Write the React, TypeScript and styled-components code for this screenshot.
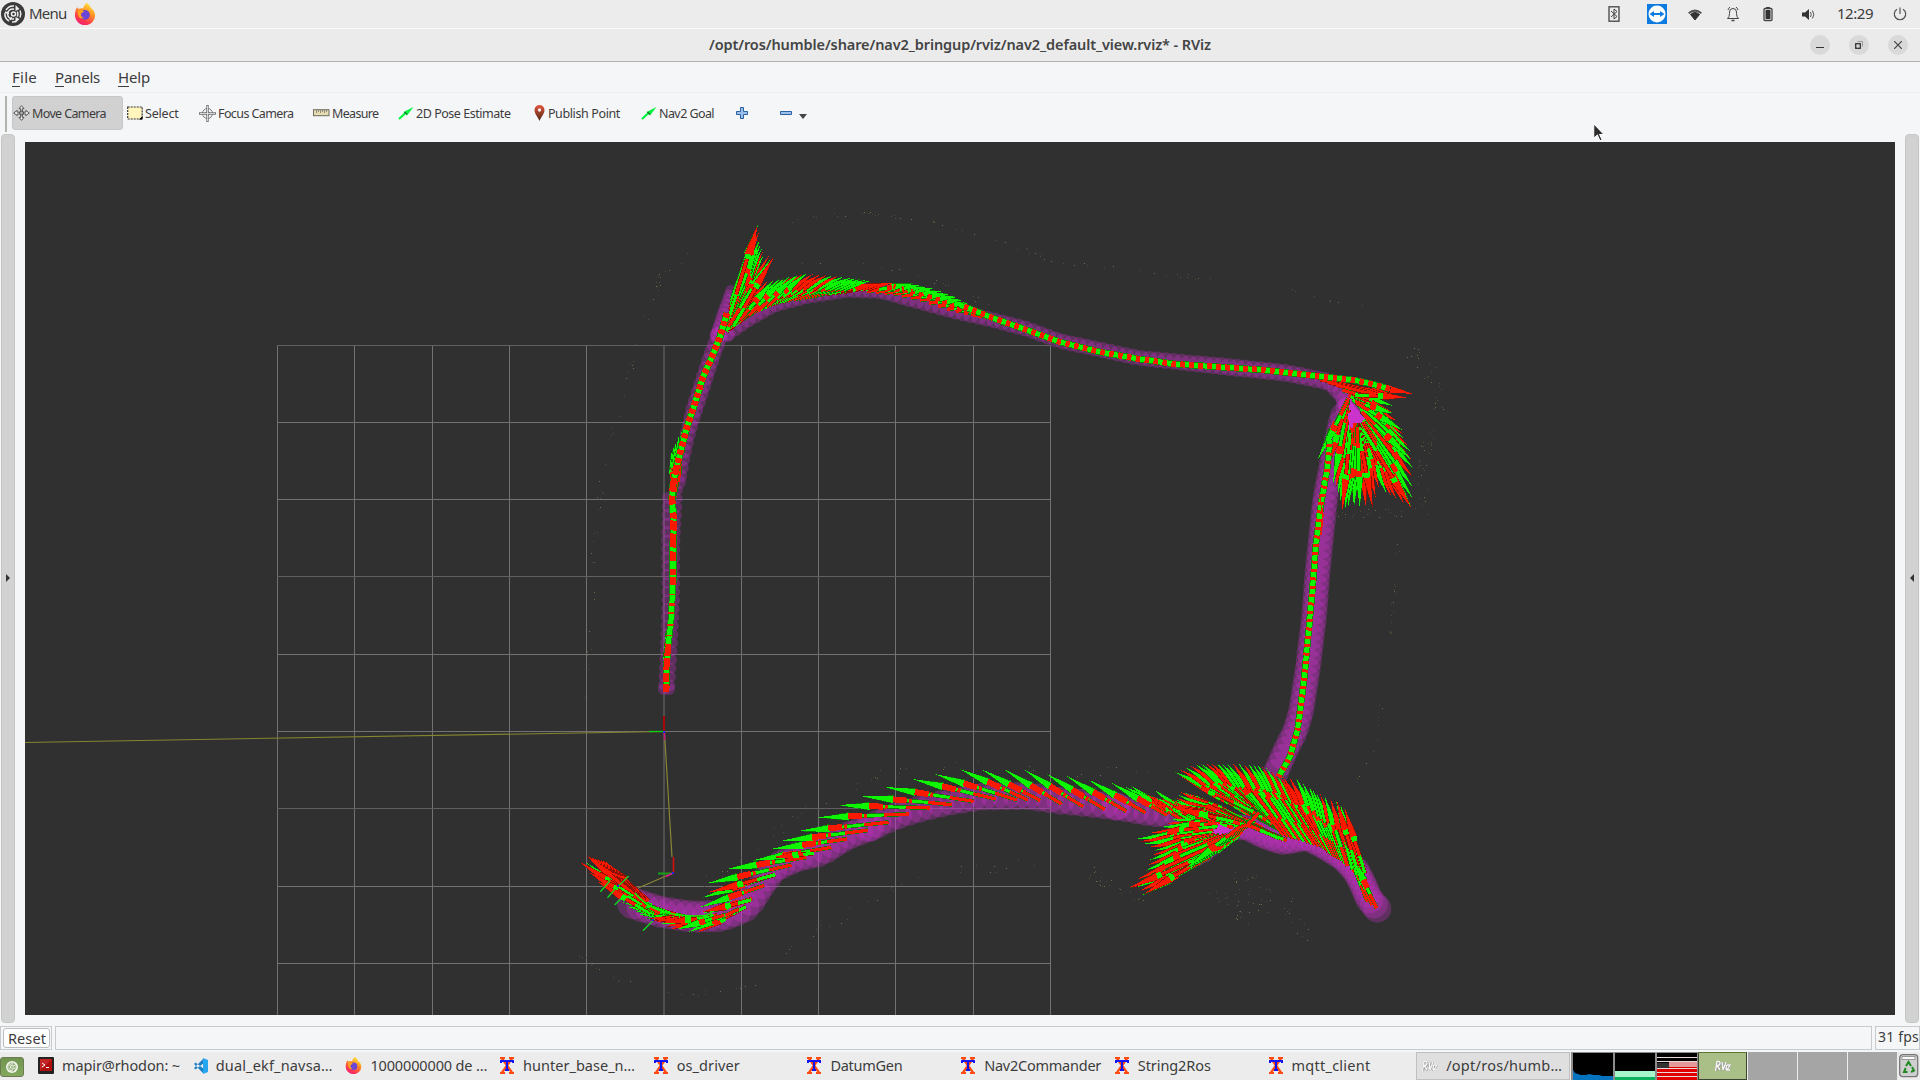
import React, { useLayoutEffect, useRef } from "react";
import styled, { createGlobalStyle } from "styled-components";

const Global = createGlobalStyle`
  * { box-sizing: border-box; }
  html, body { margin: 0; padding: 0; background: #f5f6f7; overflow: hidden; }
  body { font-family: "Noto Sans", "Open Sans", sans-serif; color: #3c3c3c; }
  svg { display: block; flex: none; }
`;

const Screen = styled.div`
  width: 1920px; height: 1080px; display: flex; flex-direction: column; overflow: hidden;
  background: #f5f6f8;
`;
const TopPanel = styled.header`
  height: 29px; flex: none; display: flex; align-items: center; justify-content: space-between;
  background: #ececec; border-bottom: 1px solid #fbfbfb; padding: 0 13px 0 1px;
`;
const TopLeft = styled.div`display: flex; align-items: center; height: 28px;`;
const MenuLabel = styled.div`margin: 0 8px 0 4px; font-size: 15px; line-height: 26px; height: 28px; width: 37px;`;
const Tray = styled.div`display: flex; align-items: center; height: 28px;`;
const TraySlot = styled.div<{ $w: number }>`
  width: ${p => p.$w}px; height: 28px; display: flex; align-items: center; justify-content: center;
`;
const Clock = styled.div`width: 36px; height: 28px; margin: 0 20px 0 1px; font-size: 15px; line-height: 26px;`;
const TitleBar = styled.div`
  height: 33px; flex: none; background: #ebebeb; border-bottom: 1px solid #b4b3b4;
  display: grid; grid-template-columns: 120px 1fr 120px; align-items: center;
`;
const Title = styled.div`
  grid-column: 2; justify-self: center; font-size: 14.5px; font-weight: 600; line-height: 30px; height: 32px; color: #444;
`;
const WinButtons = styled.div`display: flex; gap: 19px; justify-content: flex-end; padding-right: 12px;`;
const WinButton = styled.div`
  width: 20px; height: 20px; border-radius: 50%; background: #d9d9d9;
  display: flex; align-items: center; justify-content: center;
`;
const MenuBar = styled.nav`
  height: 31px; flex: none; display: flex; padding-left: 12px; gap: 18px;
  border-bottom: 1px solid #ebedee; font-size: 15px; line-height: 31px;
`;
const Mnemonic = styled.span`border-bottom: 1px solid #3c3c3c; padding-bottom: 0;`;
const MenuItem = styled.div<{ $w: number }>`width: ${p => p.$w}px; white-space: nowrap;
  & > span > span { display: inline-block; line-height: 17px; }
`;
const ToolBar = styled.div`
  height: 41px; flex: none; display: flex; align-items: flex-start; padding: 3px 0 0 5px;
`;
const ToolHandle = styled.div`width: 1.5px; height: 36px; background: #b3b3ae; margin-right: 5.5px;`;
const Tool = styled.button<{ $w: number; $gap: number; $active?: boolean }>`
  width: ${p => p.$w}px; height: 34px; margin: 0 ${p => p.$gap}px 0 0; padding: 0; display: flex; align-items: center;
  border: 1px solid ${p => (p.$active ? "#c6c6c6" : "transparent")}; border-radius: 3px;
  background: ${p => (p.$active ? "#d1d1d1" : "transparent")};
  font: 12.5px "Noto Sans", sans-serif; color: #3c3c3c;
  & > svg { margin-right: 2px; }
`;
const Body = styled.main`height: 889px; flex: none; display: flex; padding: 0 1px; justify-content: space-between; align-items: flex-start;`;
const SideHandle = styled.div`
  width: 14px; height: 889px; border: 1px solid #c4c6c8; border-radius: 4px; background: #d2d2d2;
  display: flex; align-items: center; justify-content: center; padding-bottom: 2px;
`;
const View = styled.div`width: 1870px; height: 873px; margin-top: 8px; background: #303030;`;
const StatusBar = styled.footer`height: 29px; flex: none; display: flex; align-items: flex-end; gap: 3px; padding-bottom: 2px;`;
const StatusCell = styled.div<{ $w?: number }>`
  height: 24px; border: 1px solid #c8cbcd; ${p => (p.$w ? `width: ${p.$w}px;` : "flex: 1;")}
  padding: 1px 2px; font-size: 14px; line-height: 17px; white-space: nowrap; overflow: hidden;
`;
const ResetButton = styled.div`
  height: 20px; width: 47px; background: #fff; border: 1px solid #b9bec2; border-radius: 3px;
  padding-left: 4px; font-size: 14.5px; line-height: 19px;
`;
const TaskBar = styled.footer`
  height: 28px; flex: none; display: flex; align-items: center; background: #ececec;
`;
const MateButton = styled.div`
  width: 24px; height: 20px; border: 1px solid #6b7c50; border-radius: 3px; background: linear-gradient(#6f9450, #82a95d);
  display: flex; align-items: center; justify-content: center; margin: 1px 9px 0 0;
`;
const Task = styled.div<{ $active?: boolean }>`
  width: 153.7px; height: 28px; display: flex; align-items: center; gap: 8px; padding: 0 0 2px 5px; flex: none;
  font-size: 14.5px; white-space: nowrap;
  & > svg { margin-top: 1px; }
  ${p => p.$active && "background:#dfdfdf; border:1px solid #bfbfbf; padding-left:4px; padding-bottom:2px;"}
`;
const Monitors = styled.div`display: flex; gap: 2px; height: 28px; padding: 1px 1px 0 2px; background: #8c8c8c; margin-left: 1px;`;
const Monitor = styled.div`width: 40px; height: 27px; background: #000; overflow: hidden;`;
const Workspaces = styled.div`display: flex; gap: 1px; height: 28px; background: #eee;`;
const Workspace = styled.div<{ $on?: boolean }>`
  width: 49px; height: 28px; background: ${p => (p.$on ? "#a9bf87" : "#a5a5a5")};
  ${p => p.$on && "border: 1px solid #3c4430; border-top-color: #5f7838;"}
  display: flex; align-items: center; justify-content: center;
`;
const Trash = styled.div`margin-left: 2px;`;
const FitSpan = styled.span`display: inline-block; white-space: nowrap;`;
const Pointer = styled.div`position: absolute; left: 1592px; top: 122px;`;

/* Spaces the letters so that a label takes exactly the given width. */
function Fit({ w, children }: { w: number; children: React.ReactNode }) {
  const ref = useRef<HTMLSpanElement>(null);
  useLayoutEffect(() => {
    const el = ref.current;
    if (!el) return;
    el.style.letterSpacing = "0px";
    const n = (el.textContent || "").length;
    const now = el.getBoundingClientRect().width;
    el.style.letterSpacing = `${(w - now) / n}px`;
  }, [w]);
  return <FitSpan ref={ref}>{children}</FitSpan>;
}

/* ---------- icons ---------- */
const Mate = ({ s, fg, bg }: { s: number; fg: string; bg: string }) => (
  <svg width={s} height={s} viewBox="0 0 24 24" fill="none" stroke={fg} strokeWidth="1.5">
    <circle cx="12" cy="12" r="12" fill={bg} stroke="none" />
    <path d="M13 4A8 8 0 0 0 5 8.200M4 11a8 8 0 0 0 4 8M11 20a8 8 0 0 0 4-.7M19 15.500a8 8 0 0 0 0-7" />
    <path d="M13 7.200a5 5 0 1 0 0 9.600M16.300 9.500a5 5 0 0 1 0 5" /><path d="M4 10l4 1.500M9 18l1.500-3" />
    <circle cx="12.500" cy="12" r="2" />
    <path d="M14.500 3v6l4-2zM14.500 21v-6l4 2z" fill={fg} stroke="none" />
  </svg>
);
const Fox = ({ s }: { s: number }) => (
  <svg width={s} height={s} viewBox="0 0 24 24">
    <defs>
      <linearGradient id="fx" x1=".8" y1="0" x2=".3" y2="1"><stop offset="0" stopColor="#fff04a" /><stop offset=".4" stopColor="#ff9522" /><stop offset=".8" stopColor="#ff3350" /><stop offset="1" stopColor="#f0227a" /></linearGradient>
    </defs>
    <path d="M14 0c2 1.500 4 3.500 4.500 5.500C21 7 23 10 23 13.500A11 10.500 0 0 1 1 14C1 10 1.500 7 3.500 4.500L5 6.500C7 5.500 9 5.500 10 6 11 3 12 1 14 0z" fill="url(#fx)" />
    <circle cx="12" cy="13" r="5.300" fill="#6b45d6" />
    <path d="M4 8c3-1.500 5-.5 7 1l-3 2.500c-1 2 .5 4.500 3 4.500-3 2-6 0-6.500-3z" fill="#ffa01e" />
  </svg>
);
const XTerm = () => (
  <svg width="16" height="17" viewBox="0 0 16 17">
    <path d="M1 1h5M10 1h5M1 16h5M10 16h5M3 1.500l10 14M13 1.500l-10 14" stroke="#ff4a12" strokeWidth="2.200" />
    <path d="M2 6V4h12v2M8 4v9M6 13h4" stroke="#1414f0" strokeWidth="2" fill="none" />
  </svg>
);
const Term = () => (
  <svg width="16" height="17" viewBox="0 0 16 17">
    <rect width="16" height="17" rx="1" fill="#232323" /><rect x="2" y="2" width="12" height="12" fill="#b00d0d" />
    <path d="M2 14V2h12z" fill="#d63b3b" opacity=".5" /><path d="M4 6l3 2-3 2M8 10.500h3" stroke="#fff" fill="none" />
  </svg>
);
const Code = () => (
  <svg width="16" height="16" viewBox="0 0 16 16">
    <path d="M11 1L2 10l1.500 1.500L12 5V1z M11 15L2 6l1.500-1.500L12 11v4z" fill="#1c80c6" /><path d="M11 0l5 2v12l-5 2z" fill="#27a5ee" />
  </svg>
);
const RvizMark = ({ c }: { c: string }) => (
  <svg width="17" height="14" viewBox="0 0 17 14" fill="none" stroke="#909090" strokeWidth="2.200">
    <path d="M2 12L3.300 3c4-1 4 4 0 4l3 4.500M8 3l1.200 8 2.800-8M12.800 6l-.5 5M13.500 6h2.500l-3 5h3" />
    <path d="M1.500 12L3 2.500c4-1 4 4 0 4l3 4.500M8 3l1 8 3-8M12.500 6l-.5 5M13 6h3l-3 5h3" stroke={c} strokeWidth="1.400" />
  </svg>
);
const MoveIcon = () => (
  <svg width="17" height="16" viewBox="0 0 17 16" fill="#f4f4f4" stroke="#444" strokeWidth=".9">
    <path d="M8.500.7l2.500 3H9.300v3.500h3.500V5.400l3.500 2.600-3.500 2.600V8.900H9.300v3.500H11l-2.500 3-2.500-3h1.700V8.900H4.200v1.700L.7 8l3.500-2.600v1.800h3.500V3.700H6z" /><circle cx="8.500" cy="8" r="2" fill="#aaa" />
  </svg>
);
const SelectIcon = () => (
  <svg width="16" height="14" viewBox="0 0 16 14"><rect x=".7" y="1" width="14.500" height="12" fill="#fff5bd" stroke="#333" strokeWidth="1.200" strokeDasharray="2 1" /><path d="M15.500 10v3.500H12z" fill="#000" /></svg>
);
const FocusIcon = () => (
  <svg width="17" height="17" viewBox="0 0 17 17" fill="none" stroke="#777"><circle cx="8.500" cy="8.500" r="5" /><circle cx="8.500" cy="8.500" r="2" /><path d="M8.500 0v17M0 8.500h17" strokeWidth="2.400" /><path d="M8.500 1v15M1 8.500h15" stroke="#eee" strokeWidth=".8" /></svg>
);
const RulerIcon = () => (
  <svg width="17" height="8" viewBox="0 0 17 8"><rect x=".5" y=".7" width="15.500" height="6" fill="#e6dcae" stroke="#6b6b60" /><path d="M3.500 1v3M5.500 1v2M7.500 1v3M9.500 1v2M11.500 1v3M13.500 1v2" stroke="#777" strokeWidth=".8" /></svg>
);
const GreenArrow = () => (
  <svg width="16" height="13" viewBox="0 0 16 13"><path d="M1 12L8 5.500" stroke="#00f43c" strokeWidth="2.200" /><path d="M15.500 0L5.500 5l3.500 3.500z" fill="#00f43c" /><path d="M6.500 5l2.500 2.500" stroke="#137b2b" strokeWidth="1.400" /></svg>
);
const PinIcon = () => (
  <svg width="11" height="16" viewBox="0 0 11 16"><defs><linearGradient id="pin" x2="0" y2="1"><stop offset="0" stopColor="#e4553a" /><stop offset="1" stopColor="#4a2a14" /></linearGradient></defs><path d="M5.500 16C4 12 .5 9 .5 5a5 5 0 0 1 10 0c0 4-3.500 7-5 11z" fill="url(#pin)" /><circle cx="5.500" cy="5" r="1.700" fill="#f3eeee" /></svg>
);
const PlusIcon = () => (
  <svg width="12" height="12" viewBox="0 0 12 12"><path d="M4.500.5h3v4h4v3h-4v4h-3v-4h-4v-3h4z" fill="#9cc0ea" stroke="#2c60a4" /></svg>
);
const MinusIcon = () => (
  <svg width="12" height="5" viewBox="0 0 12 5"><path d="M.5.5h11v3H.5z" fill="#9cc0ea" stroke="#2c60a4" /></svg>
);

/* ---------- 3D view ---------- */
type Pt = [number, number];
type Frame = (x: number, y: number) => Pt;
const frame = (ox: number, oy: number, sx: number, sy: number): Frame => (x, y) => [ox + x / sx, oy + y / sy];
const north = frame(560, 200, 3, 3);
const east = frame(1220, 320, 3, 3);
const west = frame(560, 740, 2.8, 3);
const south = frame(1060, 740, 3, 3);

const GREEN = "#0df500";
const RED = "#fb1a00";

function rng(seed: number) {
  let s = seed;
  return () => ((s = (s * 16807) % 2147483647) / 2147483647);
}

interface Arrow { a: Pt; b: Pt; head: string; alt: string; collar: number; bare: boolean }

/* Rows are [tail x, tail y, tip x, tip y]; extra poses are blended in between rows. */
function sweep(f: Frame, rows: number[][], between: number, mode: "mix" | "g" | "r" = "mix", collar = 8): Arrow[] {
  const out: Arrow[] = [];
  const r = rng(rows.length * 991 + Math.round(rows[0][0] * 37));
  let k = 0;
  rows.forEach((row, i) => {
    const next = rows[i + 1];
    const n = next ? between + 1 : 1;
    for (let j = 0; j < n; j++) {
      const t = j / n;
      const v = row.map((c, q) => (next ? c + (next[q] - c) * t : c));
      const flip = r() < 0.22;
      const g = mode === "g" || (mode === "mix" && (k % 2 === 0) !== flip);
      out.push({
        a: f(v[0], v[1]), b: f(v[2], v[3]), head: g ? GREEN : RED, alt: g ? RED : GREEN,
        collar: mode === "mix" ? 3 + r() * 8 : collar, bare: collar === 0 || (mode === "mix" && r() < 0.35),
      });
      k++;
    }
  });
  return out;
}

function ArrowMark({ a, b, head, alt, collar, bare }: Arrow) {
  const dx = b[0] - a[0], dy = b[1] - a[1], L = Math.hypot(dx, dy) || 1;
  const ux = dx / L, uy = dy / L, nx = -uy, ny = ux;
  const hl = Math.min(31, L * 0.48);
  const p = (d: number, w: number) => `${(a[0] + ux * d + nx * w).toFixed(1)},${(a[1] + uy * d + ny * w).toFixed(1)}`;
  const quad = (d0: number, d1: number, w: number) => [p(d0, w), p(d1, w), p(d1, -w), p(d0, -w)].join(" ");
  const dark = head === GREEN ? "#0a7d04" : "#8e1204";
  return (
    <g>
      <polygon points={quad(0, L - hl, 2.1)} fill={dark} />
      <polygon points={quad(0, L * 0.27, 1.6)} fill={bare ? head : alt} />
      <polygon points={quad(L * 0.27, L - hl, 1.4)} fill={head} />
      <polygon points={[p(L - hl, 4.2), p(L, 0), p(L - hl, -4.2)].join(" ")} fill={dark} />
      <polygon points={[p(L - hl, 3.2), p(L, 0.3), p(L - hl, -3.7)].join(" ")} fill={head} />
      {!bare && <polygon points={quad(L - hl - collar, L - hl + 1, 3)} fill={alt} />}
      {collar > 11 && <polygon points={quad(L - hl - collar - 5, L - hl - collar - 2, 2.2)} fill={alt} />}
    </g>
  );
}

/* Covariance discs, stepped along a path of [x, y, radius]. */
function discs(keys: number[][], step: number) {
  const out: number[][] = [];
  let left = 0;
  for (let i = 0; i < keys.length - 1; i++) {
    const [x0, y0, r0] = keys[i], [x1, y1, r1] = keys[i + 1];
    const L = Math.hypot(x1 - x0, y1 - y0);
    let d = left;
    for (; d < L; d += step) out.push([x0 + ((x1 - x0) * d) / L, y0 + ((y1 - y0) * d) / L, r0 + ((r1 - r0) * d) / L]);
    left = d - L;
  }
  out.push(keys[keys.length - 1]);
  return out;
}
const inFrame = (f: Frame, rows: number[][]) => rows.map(([x, y, r]) => [...f(x, y), r]);

const discSet = [
  ...discs(inFrame(west, [[205, 490, 16], [280, 515, 16], [370, 530, 16], [450, 528, 16], [510, 505, 16], [535, 480, 15], [565, 435, 14], [600, 385, 14], [660, 352, 15], [730, 335, 15], [800, 290, 14], [870, 262, 14]]), 9.5),
  ...discs(inFrame(west, [[890, 252, 14], [930, 232, 14], [990, 212, 13.5], [1050, 195, 13.5], [1110, 182, 13.5], [1180, 170, 14], [1310, 168, 14], [1400, 182, 14], [1480, 190, 14], [1560, 200, 14]]), 11),
  ...discs(inFrame(south, [[200, 208, 13], [280, 222, 13], [400, 230, 12], [490, 262, 13]]), 10),
  ...discs(inFrame(south, [[500, 262, 13], [560, 262, 13], [620, 288, 14], [672, 304, 14], [740, 290, 14], [790, 315, 14], [850, 352, 14], [890, 395, 14], [912, 440, 14], [926, 475, 14], [952, 506, 14]]), 6.5),
  ...discs(inFrame(south, [[390, 362, 9], [430, 340, 10], [480, 290, 12]]), 8),
  ...discs([[1276, 772, 13], [1287, 747, 13], [1295, 732, 13], [1301, 712, 13], [1308, 667, 13], [1314, 617, 13], [1318, 567, 13], [1325, 500, 13], [1333, 453, 12], [1342, 417, 13], [1350, 406, 12]], 8.3),
  ...discs([[1350, 408, 11], [1345, 395, 11], [1330, 382, 9], [1287, 373, 9], [1220, 366, 9], [1139, 358, 8], [1060, 341, 8], [1027, 329, 8], [993, 320, 8], [953, 311, 8], [913, 300, 8], [880, 291, 8], [847, 290, 8], [807, 296, 8], [773, 305, 8], [747, 320, 8], [727, 335, 7]], 8),
  ...discs([[731, 291, 6], [724, 313, 7], [718, 335, 8]], 5),
  ...discs([[719, 337, 9], [712, 355, 9], [704, 380, 9], [695, 407, 9], [688, 433, 8], [684, 455, 7], [679, 482, 7]], 8.5),
  ...discs([[668, 498, 6], [667, 540, 6], [667, 600, 5.5], [665, 660, 5.5], [664, 689, 6]], 8.5),
  ...discs([[678, 490, 5], [675, 540, 5.5], [675, 600, 5], [672, 660, 5], [669, 689, 6]], 8.5),
];

const tubes: { d: Pt[]; w: number; dash: string }[] = [
  { w: 6, dash: "3 5.400", d: [[1278.5, 777], [1290, 757], [1297.5, 730], [1304, 680], [1309, 627], [1313.5, 577], [1316, 543], [1321.7, 500], [1327, 470], [1330, 440]] },
  { w: 6, dash: "4.500 4.500", d: [[1390, 389], [1370, 383.5], [1353, 380], [1317, 376], [1263, 370], [1220, 367], [1175, 364], [1139, 359], [1100, 352], [1060, 342], [1027, 330], [993, 318], [960, 305]] },
  { w: 6.5, dash: "5 3.500", d: [[727, 313], [720, 337], [712, 357], [703, 377], [695, 403], [687, 427], [681, 450], [677, 465]] },
  { w: 6.5, dash: "10 3 14 4 9 8 6 2", d: [[677, 465], [673, 485], [672, 498], [673.5, 517], [673, 553], [673, 583]] },
  { w: 6, dash: "2 9 1 8 3 6 2 10", d: [[673, 583], [671, 620], [668, 647]] },
  { w: 6, dash: "9 2 12 3", d: [[668, 647], [666.5, 667], [666, 692]] },
];

const arrowSet: Arrow[] = [
  // western hook
  ...sweep(west, [[440, 525, 310, 568], [410, 530, 270, 545], [400, 540, 240, 535], [350, 530, 190, 502], [310, 520, 150, 460], [265, 515, 110, 420]], 2),
  ...sweep(west, [[280, 520, 175, 455], [240, 500, 75, 370]], 0, "g", 4),
  ...sweep(west, [[248, 483, 122, 362], [232, 480, 100, 356], [215, 470, 75, 348]], 2, "r", 0),
  ...sweep(west, [[205, 470, 57, 368], [250, 520, 105, 425]], 1, "r", 4),
  ...sweep(west, [[390, 540, 250, 535], [420, 532, 290, 548]], 1, "r", 5),
  // long southern run
  ...sweep(south, [[440, 262, 282, 150], [380, 250, 212, 138]], 0, "g", 12),
  ...sweep(west, [[1765, 237, 1583, 142], [1700, 226, 1545, 130], [1640, 218, 1480, 120], [1586, 214, 1420, 110], [1525, 208, 1362, 102], [1465, 200, 1300, 90], [1405, 192, 1245, 90], [1345, 182, 1182, 90], [1310, 180, 1120, 88], [1280, 180, 1050, 103], [1220, 177, 988, 118], [1158, 184, 910, 142], [1098, 194, 848, 170], [1037, 204, 780, 196], [977, 222, 722, 233], [920, 247, 668, 274], [862, 271, 622, 303], [803, 297, 595, 327], [760, 322, 540, 362], [690, 352, 467, 388], [648, 375, 414, 430], [603, 404, 400, 473], [572, 436, 393, 502], [538, 476, 400, 520]], 0, "g", 13),
  ...sweep(west, [[712, 340, 600, 352], [603, 404, 415, 458], [535, 480, 400, 516], [520, 500, 385, 578]], 0, "r", 5),
  ...sweep(west, [[500, 508, 360, 577], [460, 525, 330, 568]], 0, "g", 5),
  ...sweep(south, [[390, 238, 260, 165], [450, 250, 290, 175], [500, 258, 320, 180], [540, 262, 345, 178]], 1, "mix"),
  // south-east cluster
  ...sweep(south, [[680, 302, 500, 215], [650, 292, 440, 190], [610, 275, 400, 165], [580, 262, 358, 155], [550, 255, 345, 185], [520, 245, 330, 200]], 2),
  ...sweep(south, [[700, 292, 480, 170], [660, 265, 440, 145], [620, 240, 400, 130], [580, 215, 365, 112]], 2),
  ...sweep(south, [[520, 262, 330, 237], [480, 250, 305, 262], [460, 270, 232, 297], [450, 285, 250, 313], [480, 285, 285, 332], [490, 285, 270, 360], [510, 285, 258, 392], [500, 310, 207, 445], [430, 360, 230, 442], [450, 350, 250, 465]], 1),
  ...sweep(south, [[450, 340, 208, 444], [440, 350, 252, 463]], 0, "r", 4),
  ...sweep(south, [[600, 215, 470, 345], [570, 250, 400, 380], [540, 260, 380, 385]], 2, "g", 6),
  ...sweep(south, [[530, 180, 345, 97], [560, 195, 375, 82], [590, 205, 405, 72], [620, 225, 437, 70], [640, 250, 468, 68], [670, 285, 500, 70], [697, 294, 535, 70], [720, 300, 565, 72], [745, 308, 592, 75], [765, 315, 618, 85], [787, 322, 650, 108], [805, 335, 668, 110], [822, 350, 708, 115], [835, 355, 747, 142], [848, 362, 768, 158], [862, 378, 793, 168], [890, 385, 828, 185], [908, 392, 853, 205], [922, 485, 850, 300], [950, 505, 875, 345]], 1),
  ...sweep(south, [[890, 385, 830, 183], [915, 400, 853, 203]], 0, "r", 4),
  // eastern fan
  ...sweep(east, [[300, 178, 545, 232], [350, 195, 520, 238], [385, 225, 515, 275], [400, 235, 545, 328], [400, 240, 553, 355], [415, 255, 573, 395], [430, 280, 580, 445], [430, 300, 578, 500], [430, 310, 575, 563], [418, 310, 530, 538], [412, 315, 500, 520]], 1),
  ...sweep(east, [[420, 320, 478, 505], [415, 310, 458, 562], [410, 310, 420, 562], [405, 310, 385, 562], [388, 338, 368, 568], [388, 300, 355, 520], [385, 240, 340, 490], [385, 235, 295, 415]], 1),
  ...sweep(east, [[415, 330, 458, 562], [390, 340, 368, 568]], 0, "r", 4),
  ...sweep(east, [[405, 245, 520, 280], [410, 250, 548, 330], [425, 275, 575, 420], [412, 320, 420, 561], [385, 240, 298, 412]], 0, "g", 5),
  ...sweep(east, [[430, 330, 574, 563], [405, 225, 560, 232]], 0, "r", 4),
  // north-west fan
  ...sweep(north, [[1340, 375, 1200, 315]], 0, "g", 4),
  ...sweep(north, [[1240, 345, 1290, 345], [1160, 328, 1240, 318], [1080, 300, 1190, 290], [1000, 282, 1120, 265], [920, 275, 1060, 250]], 2, "g", 4),
  ...sweep(north, [[840, 278, 1000, 248], [800, 282, 960, 250]], 1, "r", 2),
  ...sweep(north, [[760, 290, 930, 242], [700, 300, 875, 232]], 3, "g", 4),
  ...sweep(north, [[680, 303, 850, 230], [640, 312, 800, 225], [600, 330, 738, 220], [560, 350, 700, 228], [520, 380, 660, 235], [500, 395, 605, 245]], 2),
  ...sweep(north, [[620, 320, 738, 221], [540, 360, 640, 240]], 2, "g", 4),
  ...sweep(north, [[500, 390, 640, 172], [505, 370, 610, 165], [510, 350, 605, 145], [510, 330, 598, 120], [515, 300, 593, 75]], 1),
  ...sweep(north, [[505, 380, 630, 178], [510, 350, 597, 122]], 0, "g", 4),
  ...sweep(north, [[520, 380, 639, 173], [505, 360, 592, 76]], 0, "r", 4),
  // small fans on the western lane
  ...sweep(north, [[345, 890, 333, 755], [350, 860, 345, 730], [358, 830, 365, 690]], 1, "g", 5),
  ...sweep(frame(600, 440, 3, 3), [[205, 745, 197, 575]], 0, "g", 4),
];

const dust: { pts: Pt[]; n: number; j: number; seed: number }[] = [
  { pts: [[790, 221], [830, 215], [880, 214], [935, 222], [1000, 241], [1060, 262], [1180, 275], [1290, 290], [1365, 307]], n: 60, j: 2, seed: 11 },
  { pts: [[690, 255], [660, 275], [652, 300], [636, 345], [622, 400], [605, 460], [596, 520], [590, 620], [588, 700]], n: 50, j: 3, seed: 23 },
  { pts: [[1410, 350], [1428, 370], [1440, 395], [1435, 430], [1422, 460], [1422, 500]], n: 55, j: 6, seed: 37 },
  { pts: [[1340, 512], [1370, 514], [1425, 510]], n: 22, j: 5, seed: 41 },
  { pts: [[1398, 545], [1393, 595], [1389, 640], [1382, 700], [1376, 745], [1355, 785]], n: 26, j: 2, seed: 53 },
  { pts: [[1215, 890], [1240, 915], [1270, 890], [1240, 870], [1245, 905], [1290, 905], [1304, 936]], n: 60, j: 9, seed: 67 },
  { pts: [[1085, 870], [1110, 885], [1140, 895]], n: 26, j: 6, seed: 71 },
  { pts: [[580, 955], [605, 972], [645, 990], [700, 993], [760, 985]], n: 22, j: 3, seed: 83 },
  { pts: [[780, 950], [830, 925], [890, 890], [940, 873], [1040, 862]], n: 26, j: 5, seed: 97 },
  { pts: [[700, 885], [745, 860], [780, 830], [820, 800], [880, 775], [960, 764], [1070, 774], [1180, 765]], n: 45, j: 5, seed: 101 },
  { pts: [[760, 265], [860, 266], [930, 276], [1010, 315]], n: 18, j: 4, seed: 113 },
];
const specks: Pt[] = dust.flatMap(({ pts, n, j, seed }) => {
  const r = rng(seed * 7919);
  return Array.from({ length: n }, () => {
    const t = r() * (pts.length - 1), i = Math.floor(t), u = t - i;
    const [x0, y0] = pts[i], [x1, y1] = pts[Math.min(i + 1, pts.length - 1)];
    return [Math.round(x0 + (x1 - x0) * u + (r() - 0.5) * 2 * j), Math.round(y0 + (y1 - y0) * u + (r() - 0.5) * 2 * j)] as Pt;
  });
});

const gridX = [277, 354, 432, 509, 586, 741, 818, 895, 973, 1050];
const gridY = [345, 422, 499, 576, 654, 731, 808, 886, 963];
const line = (p: Pt[]) => p.map(q => q.join(",")).join(" ");
const seg = (x0: number, y0: number, x1: number, y1: number) => {
  const [a, b] = west(x0, y0), [c, d] = west(x1, y1);
  return `M${a.toFixed(1)} ${b.toFixed(1)}L${c.toFixed(1)} ${d.toFixed(1)}`;
};

const Scene = () => (
  <svg width="1870" height="873" viewBox="25 142 1870 873">
    <g shapeRendering="crispEdges">
      {gridX.map(x => <rect key={x} x={x} y="345" width="1" height="670" fill="#727272" />)}
      <rect x="663" y="345" width="2" height="670" fill="#505050" />
      {gridY.map((y, i) => <rect key={y} x="277" y={y} width="774" height="1" fill={i % 3 === 0 ? "#606060" : "#727272"} />)}
      {specks.map(([x, y], i) => <rect key={i} x={x} y={y} width="1" height="1" fill={i % 3 ? "#4e4e3c" : "#6c6c48"} />)}
    </g>
    <path d="M25 742.500L664 731.500" stroke="#85852f" strokeWidth="1.100" />
    <path d="M664.500 733L672 857M673 873L637 888.500" stroke="#8a8536" strokeWidth="1.200" fill="none" />
    <g fill="#cc33cc">
      {discSet.map(([x, y, r], i) => <circle key={i} cx={x.toFixed(1)} cy={y.toFixed(1)} r={r.toFixed(1)} fillOpacity=".3" />)}
      <path d={`M${line([east(385, 235)])} L${line([east(435, 300)])} L${line([east(385, 335)])}Z`} />
      <path d={`M${line([south(475, 250)])} L${line([south(525, 268)])} L${line([south(440, 300)])}Z`} />
    </g>
    <g shapeRendering="crispEdges">
      {arrowSet.map((m, i) => <ArrowMark key={i} {...m} />)}
      {tubes.map((t, i) => (
        <g key={i} fill="none">
          <polyline points={line(t.d)} stroke="#14850c" strokeWidth={t.w + 0.8} />
          <polyline points={line(t.d)} stroke={GREEN} strokeWidth={t.w - 1} />
          <polyline points={line(t.d)} stroke={RED} strokeWidth={t.w} strokeDasharray={t.dash} />
        </g>
      ))}
      <polygon points="746,254 757.500,225 753.500,255" fill={RED} />
      <polygon points="1391,386 1413.500,394 1390,392.500" fill={RED} />
      <polygon points={line([east(384, 280), east(402, 272), east(400, 290), east(388, 332)])} fill="#cc33cc" />
      <polygon points={line([east(404, 262), east(435, 295), east(420, 312), east(412, 288)])} fill="#cc33cc" />
      <polygon points={line([south(472, 250), south(508, 266), south(478, 286)])} fill="#cc33cc" />
      <path d="M1320 497L1323 515L1321 535" stroke={RED} strokeWidth="1.500" fill="none" />
      {[0, 1, 2, 3, 4, 5].map(i => <path key={i} d={`M${895 + i * 8.5} ${284 + i * 2.6}l-1 5`} stroke={RED} strokeWidth="2" />)}
    </g>
    <path d="M635 893Q650 912 680 915T712 912" stroke={GREEN} strokeWidth="1.600" fill="none" />
    <path d={[seg(192, 408, 165, 437), seg(140, 422, 113, 455), seg(160, 440, 133, 473), seg(172, 475, 153, 495), seg(262, 540, 232, 572)].join("")} stroke="#0edc20" strokeWidth="1.300" />
    <path d="M658 873.500H673" stroke="#16a016" strokeWidth="2" />
    <path d="M673.500 857V873" stroke="#d80c0c" strokeWidth="1.600" />
    <path d="M672 873.500L666 876.500" stroke="#e0148c" strokeWidth="1.600" />
    <path d="M664 716V731" stroke="#a80808" strokeWidth="2" />
    <path d="M649 731.500H664" stroke="#0fd00f" strokeWidth="1.300" />
    <path d="M664.500 733V740" stroke="#d0107c" strokeWidth="1.500" />
    <g fill="#2222ee"><rect x="663" y="731" width="2" height="2" /><rect x="672" y="872" width="2" height="2" /><rect x="617" y="885" width="2" height="2" /><rect x="652" y="919" width="2" height="2" /></g>
  </svg>
);

const tasks: [React.ReactNode, string, number][] = [
  [<Term />, "mapir@rhodon: ~", 118], [<Code />, "dual_ekf_navsa…", 117], [<Fox s={17} />, "1000000000 de …", 117],
  [<XTerm />, "hunter_base_n…", 112], [<XTerm />, "os_driver", 63], [<XTerm />, "DatumGen", 72],
  [<XTerm />, "Nav2Commander", 117], [<XTerm />, "String2Ros", 73], [<XTerm />, "mqtt_client", 79],
];

export default function App() {
  return (
    <Screen>
      <Global />
      <TopPanel>
        <TopLeft>
          <Mate s={24} fg="#efefef" bg="#3a3a3a" />
          <MenuLabel><Fit w={37.5}>Menu</Fit></MenuLabel>
          <Fox s={22} />
        </TopLeft>
        <Tray>
          <TraySlot $w={42}><svg width="12" height="16" viewBox="0 0 12 16" fill="none" stroke="#444"><rect x="1" y=".8" width="10" height="14.400" strokeWidth="1.300" /><path d="M3 5l6 5.500L6 13V3l3 2.500L3 11" /></svg></TraySlot>
          <TraySlot $w={44}><svg width="20" height="20" viewBox="0 0 20 20"><rect width="20" height="20" fill="#0d7be0" /><circle cx="10" cy="10" r="8.500" fill="#fff" /><path d="M2.500 10l4.500-3v2h6V7l4.500 3-4.500 3v-2H7v2z" fill="#0d7be0" /></svg></TraySlot>
          <TraySlot $w={32}><svg width="16" height="13" viewBox="0 0 16 13"><path d="M1 4.500Q8-1.500 15 4.500L13.700 6Q8 1.500 2.300 6z" fill="#555" /><path d="M3.500 6.500Q8 2.500 12.500 6.500L8 12z" fill="#333" stroke="#333" /></svg></TraySlot>
          <TraySlot $w={43}><svg width="14" height="16" viewBox="0 0 14 16" fill="none" stroke="#444"><path d="M1.500 12.500Q3.500 11 3.500 7.500V6a3.500 3.500 0 0 1 7 0v1.500q0 3.500 2 5zM2 4a6 6 0 0 1 2-3M12 4a6 6 0 0 0-2-3" /><path d="M5.500 14.500h3" strokeWidth="1.500" /></svg></TraySlot>
          <TraySlot $w={27}><svg width="10" height="15" viewBox="0 0 10 15"><path d="M3 0h4v1.500H3z" fill="#444" /><rect x="1" y="1.500" width="8" height="12" rx="1" fill="none" stroke="#444" strokeWidth="1.300" /><rect x="2.500" y="3" width="5" height="9" fill="#333" /></svg></TraySlot>
          <TraySlot $w={55}><svg width="15" height="13" viewBox="0 0 15 13"><path d="M1 4.500h3L8 1v11L4 8.500H1z" fill="#333" /><path d="M9.500 4q1.500 2.500 0 5M11.500 2.500q2.500 4 0 8" stroke="#555" fill="none" /></svg></TraySlot>
          <Clock><Fit w={36}>12:29</Fit></Clock>
          <svg width="14" height="14" viewBox="0 0 14 14" fill="none" stroke="#555" strokeWidth="1.200"><path d="M4 2.200a5.700 5.700 0 1 0 6 0M7 .5v6.500" /></svg>
        </Tray>
      </TopPanel>
      <TitleBar>
        <Title><Fit w={502}>/opt/ros/humble/share/nav2_bringup/rviz/nav2_default_view.rviz* - RViz</Fit></Title>
        <WinButtons>
          <WinButton><svg width="8" height="8"><path d="M0 6.500h8" stroke="#333" /></svg></WinButton>
          <WinButton><svg width="8" height="8" fill="none"><path d="M2.500.5h5v5" stroke="#999" /><rect x=".7" y="2.700" width="4.600" height="4.600" stroke="#333" strokeWidth="1.300" /></svg></WinButton>
          <WinButton><svg width="8" height="8"><path d="M0 0l8 8M8 0L0 8" stroke="#444" strokeWidth="1.200" /></svg></WinButton>
        </WinButtons>
      </TitleBar>
      <MenuBar>
        <MenuItem $w={25}><Fit w={25}><Mnemonic>F</Mnemonic>ile</Fit></MenuItem>
        <MenuItem $w={45}><Fit w={45}><Mnemonic>P</Mnemonic>anels</Fit></MenuItem>
        <MenuItem $w={32}><Fit w={32}><Mnemonic>H</Mnemonic>elp</Fit></MenuItem>
      </MenuBar>
      <ToolBar>
        <ToolHandle />
        <Tool $w={111} $gap={3} $active><MoveIcon /><Fit w={74}>Move Camera</Fit></Tool>
        <Tool $w={60} $gap={12}><SelectIcon /><Fit w={33.5}>Select</Fit></Tool>
        <Tool $w={100} $gap={14}><FocusIcon /><Fit w={75.5}>Focus Camera</Fit></Tool>
        <Tool $w={75} $gap={10}><RulerIcon /><Fit w={46.5}>Measure</Fit></Tool>
        <Tool $w={120} $gap={16}><GreenArrow /><Fit w={94.5}>2D Pose Estimate</Fit></Tool>
        <Tool $w={95} $gap={12}><PinIcon /><Fit w={73}>&#8202;Publish Point</Fit></Tool>
        <Tool $w={85} $gap={10}><GreenArrow /><Fit w={55}>Nav2 Goal</Fit></Tool>
        <Tool $w={30} $gap={14}><PlusIcon /></Tool>
        <Tool $w={40} $gap={0}><MinusIcon /><svg width="14" height="12" viewBox="0 0 14 12"><path d="M5 7h8l-4 5z" fill="#444" /></svg></Tool>
      </ToolBar>
      <Body>
        <SideHandle><svg width="6" height="8"><path d="M1 0l4 4-4 4z" fill="#333" /></svg></SideHandle>
        <View><Scene /></View>
        <SideHandle><svg width="6" height="8"><path d="M5 0L1 4l4 4z" fill="#333" /></svg></SideHandle>
      </Body>
      <StatusBar>
        <StatusCell $w={52}><ResetButton><Fit w={38}>Reset</Fit></ResetButton></StatusCell>
        <StatusCell />
        <StatusCell $w={45}><Fit w={41}>31 fps</Fit></StatusCell>
      </StatusBar>
      <TaskBar>
        <MateButton><Mate s={12} fg="#7a9b59" bg="#f0f3ea" /></MateButton>
        {tasks.map(([icon, text, w]) => <Task key={text}>{icon}<Fit w={w}>{text}</Fit></Task>)}
        <Task $active><RvizMark c="#f8f8f8" /><Fit w={116}>/opt/ros/humb…</Fit></Task>
        <Monitors>
          <Monitor><svg width="40" height="27"><path d="M0 27V17l2 3 3 1 3 1 5 0 3-1 5 1 5 0 3 1h11v5z" fill="#0573bd" /></svg></Monitor>
          <Monitor><svg width="40" height="27"><rect y="18" width="40" height="6" fill="#a7f5cb" /><rect y="24" width="40" height="3" fill="#0db160" /></svg></Monitor>
          <Monitor><svg width="40" height="27"><path d="M0 10h12v5H0z" fill="#333" /><path d="M12 9h28v18H0V15h12z" fill="#e00000" /><path d="M12 9h28v5H12z" fill="#e59a9a" /><path d="M0 4.500h40M0 8.500h40M0 15.500h40M0 19.500h40M0 23.500h40" stroke="#e8dada" /></svg></Monitor>
        </Monitors>
        <Workspaces><Workspace $on><RvizMark c="#f6f6f6" /></Workspace><Workspace /><Workspace /><Workspace /></Workspaces>
        <Trash><svg width="20" height="24" viewBox="0 0 20 24"><rect x=".7" y=".7" width="18" height="22" rx="3" fill="#cfcfcf" stroke="#777" strokeWidth="1.300" /><path d="M3 2.500h13v3H3z" fill="#fafafa" stroke="#777" strokeWidth=".7" /><path d="M7 12l2.500-4 2.500 4M13 13l2 3.500-3 1.500M8.500 18H5l1.700-4" stroke="#208a20" strokeWidth="2" fill="none" /></svg></Trash>
      </TaskBar>
      <Pointer><svg width="15" height="21" viewBox="0 0 14 20"><path d="M1.500 1.500v14l3.500-3 2.500 5.500 2-1-2.300-5H11.500z" fill="#2b2b2b" stroke="#fff" strokeWidth="1" /></svg></Pointer>
    </Screen>
  );
}
